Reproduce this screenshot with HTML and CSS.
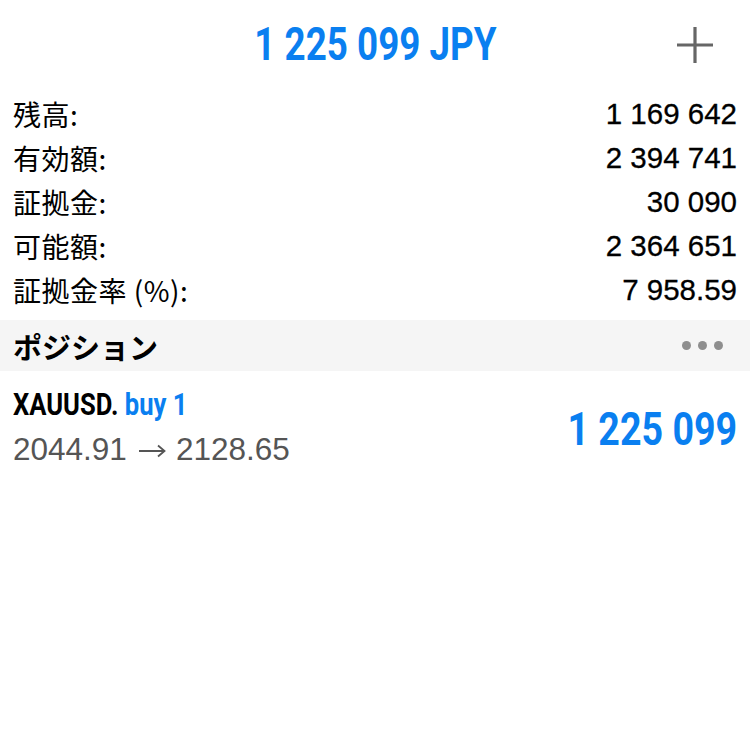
FILE: index.html
```html
<!DOCTYPE html>
<html lang="ja">
<head>
<meta charset="utf-8">
<link rel="stylesheet" href="styles.css">
</head>
<body>
<div class="app">
  <header class="top">
    <div class="total"><span class="cond">1 225 099 JPY</span></div>
    <svg class="plus" width="36" height="36" viewBox="0 0 36 36"><path d="M18 0V36M0 18H36" stroke="#666" stroke-width="3.2" fill="none"/></svg>
  </header>
  <section class="summary">
    <div class="row"><span class="label">残高:</span><span class="val">1 169 642</span></div>
    <div class="row"><span class="label">有効額:</span><span class="val">2 394 741</span></div>
    <div class="row"><span class="label">証拠金:</span><span class="val">30 090</span></div>
    <div class="row"><span class="label">可能額:</span><span class="val">2 364 651</span></div>
    <div class="row"><span class="label">証拠金率 (%):</span><span class="val">7 958.59</span></div>
  </section>
  <div class="section-head">
    <span class="section-title">ポジション</span>
    <span class="dots"><i></i><i></i><i></i></span>
  </div>
  <div class="position">
    <div class="pos-left">
      <div class="pos-line1"><span class="cond"><span class="sym">XAUUSD.</span> <span class="side">buy 1</span></span></div>
      <div class="pos-line2"><span>2044.91</span><svg class="arrow" width="28" height="14" viewBox="0 0 28 14"><path d="M1 7H26M20 1.5L26.5 7L20 12.5" stroke="#555" stroke-width="1.8" fill="none"/></svg><span>2128.65</span></div>
    </div>
    <div class="pos-profit"><span class="cond">1 225 099</span></div>
  </div>
</div>
</body>
</html>
```
FILE: styles.css
```css
html, body {
  margin: 0;
  padding: 0;
  background: #fff;
}
body {
  font-family: "Liberation Sans", "Noto Sans CJK JP", sans-serif;
  color: #000;
}
.app {
  width: 750px;
}
.cond {
  display: inline-block;
  font-family: Roboto, "Liberation Sans", sans-serif;
  font-weight: 700;
  transform: scaleX(0.8);
  white-space: nowrap;
}
.top {
  position: relative;
  height: 92px;
  display: flex;
  align-items: center;
  justify-content: center;
}
.total {
  color: #0a7ff0;
  font-size: 46px;
  line-height: 1;
  margin-top: -5px;
}
.plus {
  position: absolute;
  right: 37px;
  top: 27px;
}
.summary {
  padding: 0 13px;
}
.row {
  display: flex;
  justify-content: space-between;
  align-items: center;
  height: 44px;
}
.label {
  font-family: "Noto Sans CJK JP", sans-serif;
  font-size: 28px;
  letter-spacing: 0.5px;
}
.val {
  font-size: 29.5px;
  -webkit-text-stroke: 0.3px #000;
}
.section-head {
  margin-top: 8px;
  height: 51px;
  background: #f5f5f5;
  display: flex;
  align-items: center;
  justify-content: space-between;
  padding: 0 13px;
}
.section-title {
  font-family: "Noto Sans CJK JP", sans-serif;
  font-weight: 700;
  font-size: 29px;
}
.dots {
  display: flex;
  gap: 7px;
  margin-right: 14px;
}
.dots i {
  width: 9px;
  height: 9px;
  border-radius: 50%;
  background: #8e8e8e;
}
.position {
  display: flex;
  justify-content: space-between;
  align-items: center;
  padding: 13px 13px;
}
.pos-line1 {
  font-size: 32px;
  line-height: 40px;
}
.pos-line1 .cond {
  transform-origin: left center;
}
.sym {
  color: #000;
}
.side {
  color: #0a7ff0;
}
.pos-line2 {
  display: flex;
  align-items: center;
  font-size: 31.5px;
  color: #555;
  height: 46px;
  padding-top: 2px;
}
.arrow {
  margin: 4px 10px 0 11px;
}
.pos-profit {
  color: #0a7ff0;
  font-size: 47px;
}
.pos-profit .cond {
  transform-origin: right center;
}
```
